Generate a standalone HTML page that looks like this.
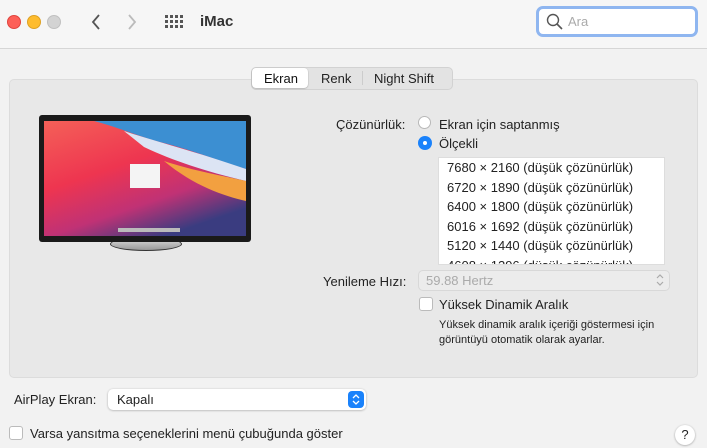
<!DOCTYPE html><html><head><style>
body{margin:0;width:707px;height:448px;background:#f2f2f2;font-family:"Liberation Sans",sans-serif;position:relative;overflow:hidden;color:#222}
.a{position:absolute}
.tb{left:0;top:0;width:707px;height:48px;background:#f6f6f6;border-bottom:1px solid #d6d6d6}
.dot{width:12px;height:12px;border-radius:50%;top:15px}
.panel{left:9px;top:79px;width:687px;height:297px;background:#e8e8e8;border:1px solid #dcdcdc;border-radius:5px}
.t{font-size:13px;white-space:nowrap}
.list div{height:19.5px;line-height:19.5px;padding-left:8px;font-size:13px}
</style></head><body>
<div class="a tb"></div>
<div class="a dot" style="left:7px;background:#fd5f57;border:0.5px solid #e0443e"></div>
<div class="a dot" style="left:27px;background:#febc2e;border:0.5px solid #dea123"></div>
<div class="a dot" style="left:47px;background:#d3d3d3;border:0.5px solid #c0c0c0"></div>
<svg class="a" style="left:88px;top:12px" width="60" height="20"><path d="M11 3 L5 10 L11 17" stroke="#555" stroke-width="1.8" fill="none"/><path d="M41 3 L47 10 L41 17" stroke="#bbb" stroke-width="1.8" fill="none"/></svg>
<svg class="a" style="left:165px;top:15px" width="18" height="14"><g fill="#555"><rect x="0" y="0" width="3" height="3"/><rect x="5" y="0" width="3" height="3"/><rect x="10" y="0" width="3" height="3"/><rect x="15" y="0" width="3" height="3"/><rect x="0" y="5" width="3" height="3"/><rect x="5" y="5" width="3" height="3"/><rect x="10" y="5" width="3" height="3"/><rect x="15" y="5" width="3" height="3"/><rect x="0" y="10" width="3" height="3"/><rect x="5" y="10" width="3" height="3"/><rect x="10" y="10" width="3" height="3"/><rect x="15" y="10" width="3" height="3"/></g></svg>
<div class="a" style="left:200px;top:13px;font-size:15px;font-weight:bold;color:#333">iMac</div>
<div class="a" style="left:536px;top:6px;width:162px;height:31px;border:3px solid #8fb6f0;border-radius:7px;background:#fff;box-sizing:border-box"></div>
<svg class="a" style="left:546px;top:12px" width="18" height="20"><circle cx="7" cy="8" r="5.5" stroke="#555" stroke-width="1.4" fill="none"/><path d="M11 12 L16 17" stroke="#555" stroke-width="1.6"/></svg>
<div class="a t" style="left:568px;top:14px;color:#aaa">Ara</div>
<div class="a panel"></div>
<div class="a" style="left:251px;top:67px;width:200px;height:21px;background:#e3e3e3;border:1px solid #d2d2d2;border-radius:5px"></div>
<div class="a" style="left:252px;top:68px;width:56px;height:20px;background:#fff;border-radius:4px;box-shadow:0 0.5px 1.5px rgba(0,0,0,.3)"></div>
<div class="a t" style="left:264px;top:71px;color:#111">Ekran</div>
<div class="a t" style="left:321px;top:71px">Renk</div>
<div class="a" style="left:362px;top:71px;width:1px;height:14px;background:#ccc"></div>
<div class="a t" style="left:374px;top:71px">Night Shift</div>
<!-- monitor -->
<div class="a" style="left:110px;top:237px;width:70px;height:12px;border-radius:50%;background:linear-gradient(#ddd,#999);border:1px solid #333"></div>
<div class="a" style="left:39px;top:115px;width:212px;height:127px;background:#1a1a1a;border-radius:3px"></div>
<svg class="a" style="left:44px;top:121px" width="202" height="115">
<defs><linearGradient id="g" x1="0" y1="0" x2="0.6" y2="1"><stop offset="0" stop-color="#f46058"/><stop offset="0.45" stop-color="#ee3550"/><stop offset="0.75" stop-color="#c03275"/><stop offset="1" stop-color="#3a3c80"/></linearGradient></defs>
<rect width="202" height="115" fill="url(#g)"/>
<path d="M50 0 L202 0 L202 48 C170 38 150 30 120 22 C95 16 80 8 50 0Z" fill="#3c8fd2"/>
<path d="M80 10 C110 20 150 30 202 48 L202 60 C160 50 130 40 100 26Z" fill="#dce4f4"/>
<path d="M120 40 C150 50 180 55 202 60 L202 80 C180 75 150 65 120 40Z" fill="#f2a040"/>
<rect x="86" y="43" width="30" height="24" fill="#f4f4f4"/>
<rect x="74" y="107" width="62" height="4" fill="#bbb"/>
</svg>
<!-- right -->
<div class="a t" style="left:336px;top:117px">Çözünürlük:</div>
<div class="a" style="left:418px;top:116px;width:13px;height:13px;border-radius:50%;background:#fff;border:1px solid #b8b8b8;box-sizing:border-box"></div>
<div class="a t" style="left:439px;top:117px">Ekran için saptanmış</div>
<div class="a" style="left:418px;top:136px;width:14px;height:14px;border-radius:50%;background:#1a82fb"></div>
<div class="a" style="left:423px;top:141px;width:4px;height:4px;border-radius:50%;background:#fff"></div>
<div class="a t" style="left:439px;top:136px">Ölçekli</div>
<div class="a list" style="left:438px;top:157px;width:225px;height:106px;background:#fff;overflow:hidden;border:0.5px solid #ddd">
<div>7680 × 2160 (düşük çözünürlük)</div><div>6720 × 1890 (düşük çözünürlük)</div><div>6400 × 1800 (düşük çözünürlük)</div><div>6016 × 1692 (düşük çözünürlük)</div><div>5120 × 1440 (düşük çözünürlük)</div><div>4608 × 1296 (düşük çözünürlük)</div></div>
<div class="a t" style="left:323px;top:274px">Yenileme Hızı:</div>
<div class="a" style="left:418px;top:270px;width:252px;height:21px;background:#ececec;border:1px solid #d8d8d8;border-radius:5px;box-sizing:border-box"></div>
<div class="a t" style="left:426px;top:273px;color:#aaa">59.88 Hertz</div>
<svg class="a" style="left:655px;top:273px" width="10" height="14"><path d="M2 5 L5 2 L8 5 M2 9 L5 12 L8 9" stroke="#aaa" stroke-width="1.2" fill="none"/></svg>
<div class="a" style="left:419px;top:297px;width:14px;height:14px;background:#fff;border:1px solid #bbb;border-radius:3px;box-sizing:border-box"></div>
<div class="a t" style="left:439px;top:297px">Yüksek Dinamik Aralık</div>
<div class="a" style="left:439px;top:318px;font-size:11px;line-height:15px">Yüksek dinamik aralık içeriği göstermesi için<br>görüntüyü otomatik olarak ayarlar.</div>
<!-- bottom -->
<div class="a t" style="left:14px;top:392px">AirPlay Ekran:</div>
<div class="a" style="left:108px;top:389px;width:258px;height:21px;background:#fff;border-radius:5px;box-shadow:0 0.5px 2px rgba(0,0,0,.3)"></div>
<div class="a t" style="left:117px;top:392px">Kapalı</div>
<div class="a" style="left:348px;top:391px;width:16px;height:17px;background:#1a82fb;border-radius:4px"></div>
<svg class="a" style="left:350px;top:393px" width="12" height="13"><path d="M3 5 L6 2 L9 5 M3 8 L6 11 L9 8" stroke="#fff" stroke-width="1.3" fill="none"/></svg>
<div class="a" style="left:9px;top:426px;width:14px;height:14px;background:#fff;border:1px solid #bbb;border-radius:3px;box-sizing:border-box"></div>
<div class="a t" style="left:30px;top:426px">Varsa yansıtma seçeneklerini menü çubuğunda göster</div>
<div class="a" style="left:675px;top:425px;width:20px;height:20px;border-radius:50%;background:#fff;box-shadow:0 0.5px 2px rgba(0,0,0,.35);text-align:center;line-height:20px;font-size:13px">?</div>
</body></html>
